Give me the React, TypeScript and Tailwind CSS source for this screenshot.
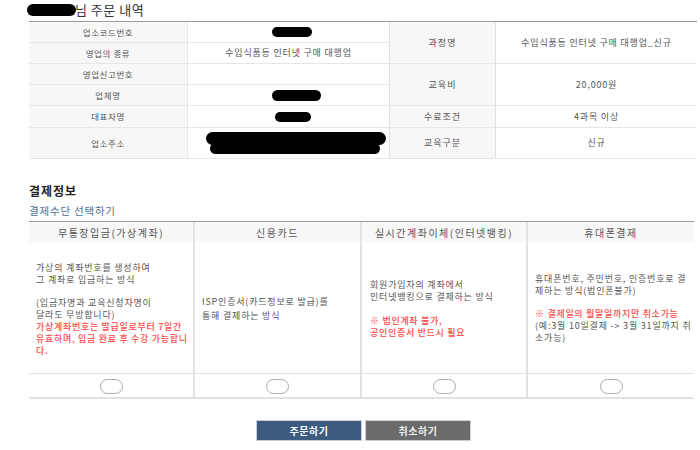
import React from "react";

const font = { fontFamily: '"Noto Sans CJK KR", "Noto Sans", sans-serif' };

// black marker blobs that hide personal data in the reference
function Blob({ className }: { className: string }) {
  return <span className={`inline-block bg-black rounded-full ${className}`} />;
}

const labelCell = "flex items-center justify-center bg-[#f7f7f7] border-b border-[#e6e6e6] text-[#555]";
const valueCell = "flex items-center justify-center border-b border-[#e6e6e6] text-[#555] text-[9px] tracking-[0.8px]";
const leftLabel = `${labelCell} col-start-1 border-r border-r-[#e6e6e6] text-[8.5px] tracking-[0.6px]`;
const rightLabel = `${labelCell} col-start-3 border-l border-l-[#e0e0e0] border-r border-r-[#e0e0e0] text-[9px] tracking-[1px]`;

function OrderTable() {
  return (
    <div className="ml-[29px] w-[668px] border-t border-[#9a9a9a] grid grid-cols-[159px_201px_107px_201px] grid-rows-[21px_21px_21px_21px_22px_31px]">
      {/* left half */}
      <div className={`${leftLabel} row-start-1`}>업소코드번호</div>
      <div className={`${valueCell} col-start-2 row-start-1 pl-[7px]`}><Blob className="w-[40px] h-[10px]" /></div>
      <div className={`${leftLabel} row-start-2`}>영업의 종류</div>
      <div className={`${valueCell} col-start-2 row-start-2`}>수입식품등 인터넷 구매 대행업</div>
      <div className={`${leftLabel} row-start-3`}>영업신고번호</div>
      <div className={`${valueCell} col-start-2 row-start-3`} />
      <div className={`${leftLabel} row-start-4`}>업체명</div>
      <div className={`${valueCell} col-start-2 row-start-4 pl-[15px]`}><Blob className="w-[49px] h-[11px]" /></div>
      <div className={`${leftLabel} row-start-5`}>대표자명</div>
      <div className={`${valueCell} col-start-2 row-start-5 pl-[9px]`}><Blob className="w-[36px] h-[10px]" /></div>
      <div className={`${leftLabel} row-start-6`}>업소주소</div>
      <div className={`${valueCell} col-start-2 row-start-6 pl-[14px]`}>
        <span className="inline-flex flex-col items-start">
          <span className="block w-[180px] h-[13px] bg-black rounded-[7px]" />
          <span className="block ml-[4px] w-[170px] h-[11px] bg-black rounded-[6px] -mt-[2px]" />
        </span>
      </div>

      {/* right half */}
      <div className={`${rightLabel} row-start-1 row-span-2`}>과정명</div>
      <div className={`${valueCell} col-start-4 row-start-1 row-span-2`}>수입식품등 인터넷 구매 대행업_신규</div>
      <div className={`${rightLabel} row-start-3 row-span-2`}>교육비</div>
      <div className={`${valueCell} col-start-4 row-start-3 row-span-2`}>20,000원</div>
      <div className={`${rightLabel} row-start-5`}>수료조건</div>
      <div className={`${valueCell} col-start-4 row-start-5`}>4과목 이상</div>
      <div className={`${rightLabel} row-start-6`}>교육구분</div>
      <div className={`${valueCell} col-start-4 row-start-6`}>신규</div>
    </div>
  );
}

const methods = ["무통장입금(가상계좌)", "신용카드", "실시간계좌이체(인터넷뱅킹)", "휴대폰결제"];

function PaymentTable() {
  const divider = "border-r-2 border-[#e2e2e2]";
  const red = "text-[#ff4848] font-medium tracking-[0.7px]";
  return (
    <div className="ml-[29px] w-[665px] border-t border-[#9a9a9a]">
      {/* header */}
      <div className="grid grid-cols-[166px_167px_166px_166px] h-[20px] bg-[#f7f7f7] text-[10px] text-[#555] tracking-[1.5px]">
        {methods.map((m, i) => (
          <div key={m} className={`flex items-center justify-center ${i < 3 ? divider : ""}`}>{m}</div>
        ))}
      </div>

      {/* descriptions */}
      <div className="grid grid-cols-[166px_167px_166px_166px] h-[131px] text-[9px] leading-[12px] tracking-[0.8px] text-[#555] whitespace-nowrap">
        <div className={`flex flex-col justify-center pl-[7px] pt-[4px] ${divider}`}>
          <p>가상의 계좌번호를 생성하여<br />그 계좌로 입금하는 방식</p>
          <p className="mt-[11px]">(입금자명과 교육신청자명이<br />달라도 무방합니다)</p>
          <p className={red}>가상계좌번호는 발급일로부터 7일간<br />유효하며, 입금 완료 후 수강 가능합니<br />다.</p>
        </div>
        <div className={`flex flex-col justify-center pl-[7px] pt-[2px] ${divider}`}>
          <p className="leading-[14px]">ISP인증서(카드정보로 발급)를<br />통해 결제하는 방식</p>
        </div>
        <div className={`flex flex-col justify-center pl-[8px] pt-[2px] ${divider}`}>
          <p>회원가입자의 계좌에서<br />인터넷뱅킹으로 결제하는 방식</p>
          <p className={`mt-[12px] ${red}`}>※ 법인계좌 불가,<br />공인인증서 반드시 필요</p>
        </div>
        <div className="flex flex-col justify-center pl-[7px] pt-[2px]">
          <p>휴대폰번호, 주민번호, 인증번호로 결<br />제하는 방식(법인폰불가)</p>
          <p className={`mt-[11px] ${red}`}>※ 결제일의 월말일까지만 취소가능</p>
          <p>(예:3월 10일결제 -&gt; 3월 31일까지 취<br />소가능)</p>
        </div>
      </div>

      {/* radios */}
      <div className="grid grid-cols-[166px_167px_166px_166px] h-[26px] border-t border-b-2 border-[#e2e2e2]">
        {methods.map((m, i) => (
          <div key={m} className={`flex items-center justify-center pt-[2px] ${i < 3 ? divider : ""}`}>
            <span className="w-[23px] h-[15px] rounded-full border border-[#aaa] bg-white" />
          </div>
        ))}
      </div>
    </div>
  );
}

export default function App() {
  return (
    <div className="w-[700px] h-[450px] bg-white overflow-hidden" style={font}>
      <div className="h-[20px] pl-[27px] flex items-center text-[13px] tracking-[0.5px] text-[#333]">
        <Blob className="w-[49px] h-[12px]" />
        <span className="-ml-[1px]">님 주문 내역</span>
      </div>

      <div className="mt-[1px]">
        <OrderTable />
      </div>

      <h2 className="mt-[25px] ml-[29px] text-[12px] leading-[14px] font-bold tracking-[1px] text-[#222]">결제정보</h2>
      <p className="mt-[6px] ml-[29px] text-[10.5px] leading-[14px] tracking-[0.8px] text-[#4f6f99]">결제수단 선택하기</p>

      <div className="mt-[3px]">
        <PaymentTable />
      </div>

      <div className="ml-[29px] w-[665px] mt-[21px] flex justify-center gap-[3px] pl-[4px]">
        <button className="w-[106px] h-[21px] bg-[#3d5a7f] border border-[#c8d0da] text-white text-[10px] font-bold tracking-[0.5px]">
          주문하기
        </button>
        <button className="w-[106px] h-[21px] bg-[#6b6b6b] border border-[#cfcfcf] text-[#eee] text-[10px] font-bold tracking-[0.5px]">
          취소하기
        </button>
      </div>
    </div>
  );
}
